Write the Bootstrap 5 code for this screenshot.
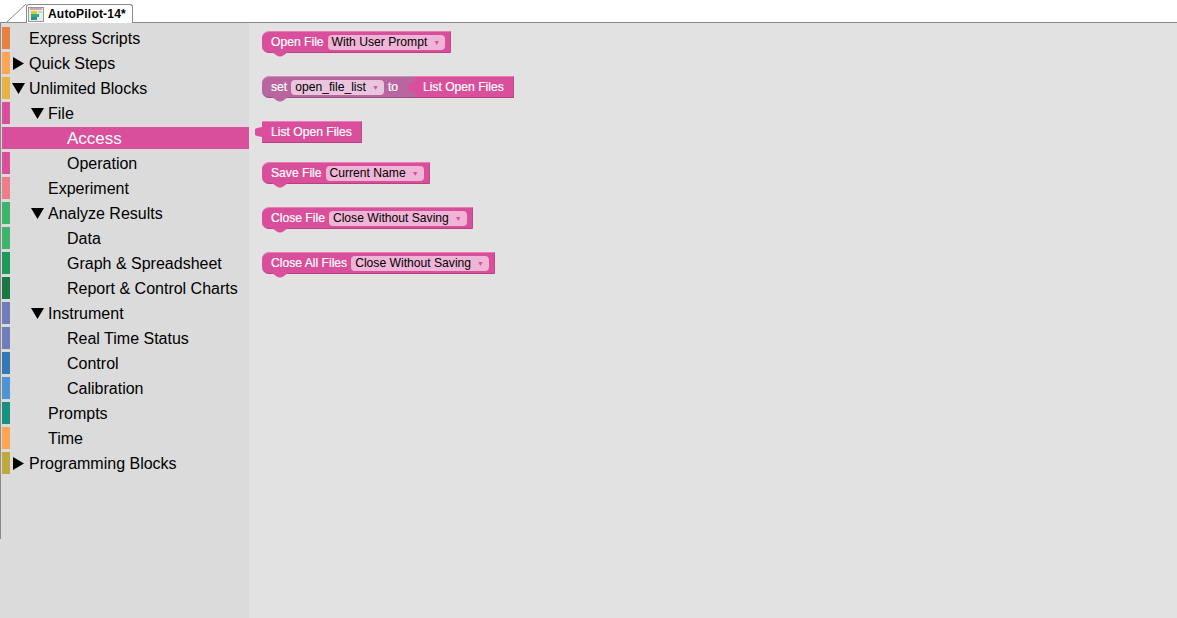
<!DOCTYPE html>
<html lang="en">
<head>
<meta charset="utf-8">
<title>AutoPilot-14</title>
<link rel="stylesheet" href="https://cdn.jsdelivr.net/npm/bootstrap@5.3.0/dist/css/bootstrap.min.css">
<style>
html,body{height:100%;overflow:hidden}
body{font-family:"Liberation Sans",Arial,sans-serif;background:#e2e2e2;color:#000}
.tabstrip{height:23px;background:#fff;border-bottom:1px solid #8a8a8a;position:relative}
.tabslant{position:absolute;left:6px;top:3px}
.doc-tab{margin-left:26px;height:19px;width:107px;margin-top:4px;border:1px solid #8a8a8a;border-bottom:0;border-radius:3px 3px 0 0;background:#fff;font-size:12px;font-weight:700;letter-spacing:.2px;position:relative;z-index:1;padding-left:1px;gap:4px}
.workarea{height:595px}
.tree-pane{width:249px;background:#dbdbdb;padding:4px 0 0 0;position:relative;flex:none}
.tree-edge{position:absolute;left:0;top:0;width:1px;height:516px;background:#8a8a8a}
.tree-row{height:25px;padding-left:2px;font-size:16px;line-height:24px;white-space:nowrap}
.tree-row .swatch{width:8px;height:22px;flex:none}
.tree-row .tw{width:19px;height:22px;flex:none;display:flex;align-items:center;justify-content:center;padding-right:3px}
.tree-row .ind{flex:none}
.tree-row.sel .sel-fill{background:#d94f9b;color:#fff;height:22px;line-height:23px;width:247px;display:flex;padding-left:65px;font-size:17px}
.lv1{width:19px}.lv2{width:38px}
.canvas-pane{padding:8px 0 0 13px;min-width:0}
.bk{height:22px;background:#d94f9b;border-top:1px solid #ea7fb8;border-bottom:1px solid #b93f83;border-right:1px solid #c2468b;color:#fff;font-size:12.13px;-webkit-text-stroke:.2px #fff;display:inline-flex;align-items:center;padding-left:9px;padding-right:5px;position:relative;width:max-content;white-space:nowrap}
.hat{border-radius:7px 0 0 7px}
.bk .notch{position:absolute;left:10px;bottom:-5px}
.bk .fld{height:15px;line-height:15px;background:#f0b4d7;border-radius:4px;color:#000;margin-left:4px;padding:0 5px 0 4px;display:inline-flex;align-items:center;-webkit-text-stroke:0}
.fld .dd{color:#d94f9b;font-size:7px;margin-left:6px;line-height:1}
.bk.var{background:#b9659f;border-top-color:#cf8fbb;border-bottom-color:#9a4f84;border-right:0;padding-right:0}
.bk.var .fld{background:#e9c6dd}
.bk.var .fld .dd{color:#b9659f}
.bk.var .lbl2{margin-left:4px;width:27px}
.bk.val{padding-left:8px;padding-right:9px}
.bk.solo{padding-left:9px}
.bk .plug{position:absolute;left:-7px;top:5px}
.gap-a{margin-bottom:23px}.gap-b{margin-bottom:19px}
</style>
</head>
<body>
<div class="tabstrip d-flex">
  <svg class="tabslant" width="22" height="20" viewBox="0 0 22 20"><path d="M1 19 L20 1" stroke="#8a8a8a" fill="none"/></svg>
  <div class="doc-tab d-flex align-items-center">
    <svg width="16" height="15" viewBox="0 0 16 15">
      <rect x=".5" y=".5" width="15" height="14" fill="#e8efe9" stroke="#9a9a9a"/>
      <rect x="2" y="1" width="12" height="2" fill="#c9a7b3"/>
      <rect x="3" y="4" width="6" height="3" fill="#e4c53a"/>
      <rect x="3" y="7" width="8" height="3" fill="#2fae7a"/>
      <rect x="3" y="10" width="6" height="3" fill="#2a8f9c"/>
      <rect x="10" y="4" width="4" height="2" fill="#bcd9cf"/>
    </svg>
    <span>AutoPilot-14*</span>
  </div>
</div>
<div class="workarea d-flex">
  <nav class="tree-pane">
    <div class="tree-edge"></div>
    <div class="tree-row d-flex"><span class="swatch" style="background:#e8803f"></span><span class="tw"></span>Express Scripts</div>
    <div class="tree-row d-flex"><span class="swatch" style="background:#ffa552"></span><span class="tw"><svg width="11" height="13" viewBox="0 0 11 13"><path d="M0 0 L11 6.5 L0 13Z"/></svg></span>Quick Steps</div>
    <div class="tree-row d-flex"><span class="swatch" style="background:#e8b33f"></span><span class="tw"><svg width="13" height="11" viewBox="0 0 13 11"><path d="M0 0 H13 L6.5 11Z"/></svg></span>Unlimited Blocks</div>
    <div class="tree-row d-flex"><span class="swatch" style="background:#d94f9b"></span><span class="ind lv1"></span><span class="tw"><svg width="13" height="11" viewBox="0 0 13 11"><path d="M0 0 H13 L6.5 11Z"/></svg></span>File</div>
    <div class="tree-row sel d-flex"><span class="sel-fill">Access</span></div>
    <div class="tree-row d-flex"><span class="swatch" style="background:#d94f9b"></span><span class="ind lv2"></span><span class="tw"></span>Operation</div>
    <div class="tree-row d-flex"><span class="swatch" style="background:#ec7e8a"></span><span class="ind lv1"></span><span class="tw"></span>Experiment</div>
    <div class="tree-row d-flex"><span class="swatch" style="background:#3cb56b"></span><span class="ind lv1"></span><span class="tw"><svg width="13" height="11" viewBox="0 0 13 11"><path d="M0 0 H13 L6.5 11Z"/></svg></span>Analyze Results</div>
    <div class="tree-row d-flex"><span class="swatch" style="background:#3cb56b"></span><span class="ind lv2"></span><span class="tw"></span>Data</div>
    <div class="tree-row d-flex"><span class="swatch" style="background:#1b9a59"></span><span class="ind lv2"></span><span class="tw"></span>Graph &amp; Spreadsheet</div>
    <div class="tree-row d-flex"><span class="swatch" style="background:#1a7845"></span><span class="ind lv2"></span><span class="tw"></span>Report &amp; Control Charts</div>
    <div class="tree-row d-flex"><span class="swatch" style="background:#6f7dbc"></span><span class="ind lv1"></span><span class="tw"><svg width="13" height="11" viewBox="0 0 13 11"><path d="M0 0 H13 L6.5 11Z"/></svg></span>Instrument</div>
    <div class="tree-row d-flex"><span class="swatch" style="background:#6f7dbc"></span><span class="ind lv2"></span><span class="tw"></span>Real Time Status</div>
    <div class="tree-row d-flex"><span class="swatch" style="background:#3478b8"></span><span class="ind lv2"></span><span class="tw"></span>Control</div>
    <div class="tree-row d-flex"><span class="swatch" style="background:#4f94d2"></span><span class="ind lv2"></span><span class="tw"></span>Calibration</div>
    <div class="tree-row d-flex"><span class="swatch" style="background:#17917f"></span><span class="ind lv1"></span><span class="tw"></span>Prompts</div>
    <div class="tree-row d-flex"><span class="swatch" style="background:#ffa552"></span><span class="ind lv1"></span><span class="tw"></span>Time</div>
    <div class="tree-row d-flex"><span class="swatch" style="background:#bfa93f"></span><span class="tw"><svg width="11" height="13" viewBox="0 0 11 13"><path d="M0 0 L11 6.5 L0 13Z"/></svg></span>Programming Blocks</div>
  </nav>
  <main class="canvas-pane d-flex flex-column flex-grow-1">
    <div class="bk hat gap-a">Open File<span class="fld">With User Prompt<span class="dd">&#9660;</span></span><svg class="notch" width="16" height="5" viewBox="0 0 16 5"><path d="M0 0 L4 3 Q8 6 12 3 L16 0Z" fill="#d94f9b"/></svg></div>
    <div class="d-flex gap-a">
      <div class="bk hat var">set<span class="fld">open_file_list<span class="dd">&#9660;</span></span><span class="lbl2">to</span><svg class="notch" width="16" height="5" viewBox="0 0 16 5"><path d="M0 0 L4 3 Q8 6 12 3 L16 0Z" fill="#b9659f"/></svg></div>
      <div class="bk val">List Open Files<svg class="plug" width="7" height="10" viewBox="0 0 7 10"><path d="M7 0 L2 1 L0 2 V8 L2 9 L7 10Z" fill="#d94f9b"/></svg></div>
    </div>
    <div class="bk val solo gap-b">List Open Files<svg class="plug" width="7" height="10" viewBox="0 0 7 10"><path d="M7 0 L2 1 L0 2 V8 L2 9 L7 10Z" fill="#d94f9b"/></svg></div>
    <div class="bk hat gap-a">Save File<span class="fld">Current Name<span class="dd">&#9660;</span></span><svg class="notch" width="16" height="5" viewBox="0 0 16 5"><path d="M0 0 L4 3 Q8 6 12 3 L16 0Z" fill="#d94f9b"/></svg></div>
    <div class="bk hat gap-a">Close File<span class="fld">Close Without Saving<span class="dd">&#9660;</span></span><svg class="notch" width="16" height="5" viewBox="0 0 16 5"><path d="M0 0 L4 3 Q8 6 12 3 L16 0Z" fill="#d94f9b"/></svg></div>
    <div class="bk hat">Close All Files<span class="fld">Close Without Saving<span class="dd">&#9660;</span></span><svg class="notch" width="16" height="5" viewBox="0 0 16 5"><path d="M0 0 L4 3 Q8 6 12 3 L16 0Z" fill="#d94f9b"/></svg></div>
  </main>
</div>
<script src="https://cdn.jsdelivr.net/npm/bootstrap@5.3.0/dist/js/bootstrap.bundle.min.js"></script>
</body>
</html>
